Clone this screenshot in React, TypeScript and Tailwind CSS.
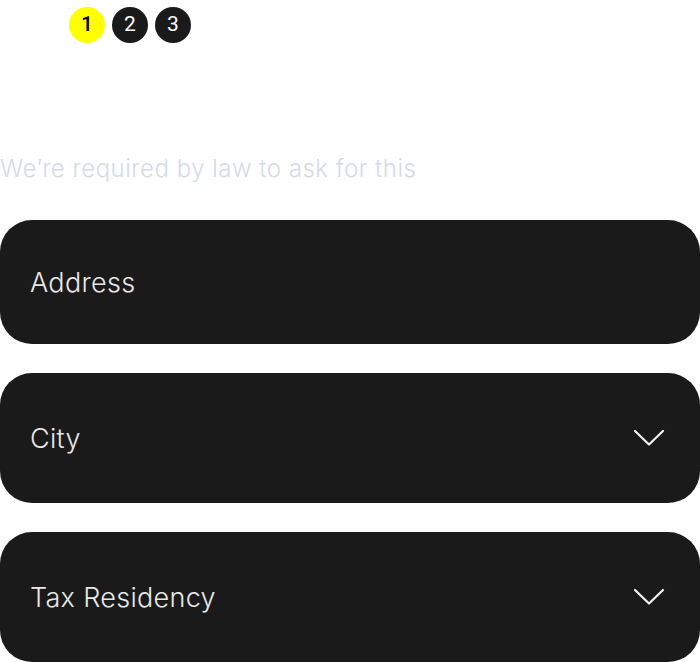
import React from 'react';

const steps = [1, 2, 3];

const Chevron = () => (
  <svg width="32" height="18" viewBox="0 0 32 18" fill="none">
    <path d="M2 2 L16 15.5 L30 2" stroke="#f2f2f2" strokeWidth="2.2" strokeLinecap="round" strokeLinejoin="round" />
  </svg>
);

interface FieldProps {
  label: string;
  select?: boolean;
  tall?: boolean;
}

const Field = ({ label, select, tall }: FieldProps) => (
  <div
    className={`flex items-center justify-between rounded-[32px] bg-[#1a1a1a] pl-[30px] pr-[35px] ${
      tall ? 'h-[130px]' : 'h-[124px]'
    }`}
  >
    <span className="text-[27px] leading-none font-light tracking-[0.3px] text-[#e8e8e8]">{label}</span>
    {select && <Chevron />}
  </div>
);

const App = () => {
  return (
    <div className="min-h-screen overflow-hidden bg-white font-['Inter',sans-serif]">
      <div className="flex gap-[7px] pl-[69px] pt-[7px]">
        {steps.map((n) => (
          <div
            key={n}
            className={`flex h-[36px] w-[36px] items-center justify-center rounded-full font-['Roboto',sans-serif] text-[21px] ${
              n === 1 ? 'bg-[#ffff00] font-medium text-black' : 'bg-[#1a1a1a] font-normal text-white'
            }`}
          >
            {n}
          </div>
        ))}
      </div>

      <h1 className="mt-[37px] h-[40px] text-[32px] leading-[40px] font-semibold text-white">
        Where do you live?
      </h1>

      <p className="mt-[32px] h-[32px] text-[24px] leading-[34px] font-light tracking-[0.5px] text-[#d3dbe6]">
        We’re required by law to ask for this
      </p>

      <div className="mt-[36px] flex flex-col gap-[29px]">
        <Field label="Address" />
        <Field label="City" select tall />
        <Field label="Tax Residency" select tall />
      </div>
    </div>
  );
};

export default App;
